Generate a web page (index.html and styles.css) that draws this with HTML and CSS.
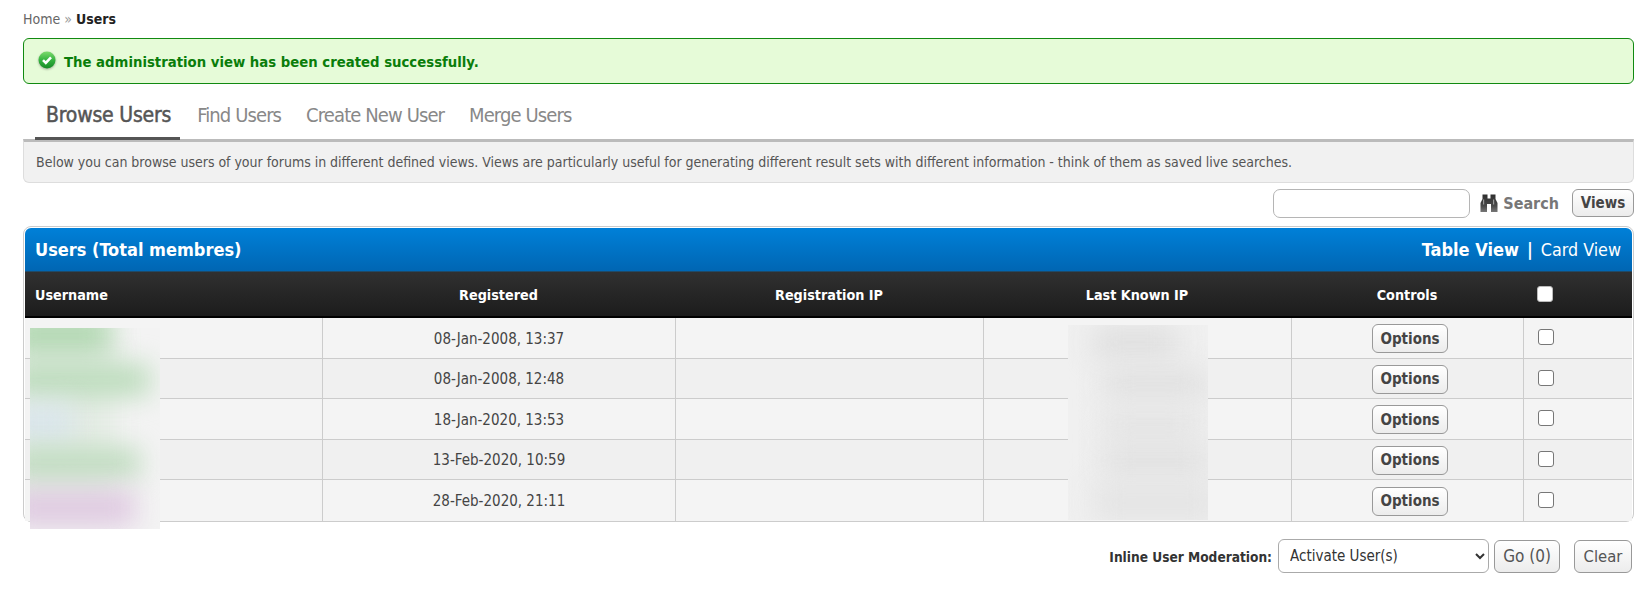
FILE: index.html
```html
<!DOCTYPE html>
<html lang="en">
<head>
<meta charset="utf-8">
<title>Users</title>
<link rel="stylesheet" href="styles.css">
</head>
<body>
<div class="breadcrumb"><a class="crumb">Home</a> <span class="sep">»</span> <strong>Users</strong></div>
<div class="success">
  <svg class="ok-icon" width="18" height="18" viewBox="0 0 18 18"><defs><linearGradient id="g" x1="0" y1="0" x2="0" y2="1"><stop offset="0" stop-color="#7edb6e"/><stop offset=".5" stop-color="#35b33f"/><stop offset="1" stop-color="#158a25"/></linearGradient></defs><circle cx="9" cy="9" r="8.500" fill="url(#g)"/><path d="M5 9.200l2.800 2.800L13 6.400" fill="none" stroke="#fff" stroke-width="2.600"/></svg>
  <span>The administration view has been created successfully.</span>
</div>
<nav class="tabs">
  <a class="tab active">Browse Users</a>
  <a class="tab">Find Users</a>
  <a class="tab">Create New User</a>
  <a class="tab">Merge Users</a>
</nav>
<div class="desc">Below you can browse users of your forums in different defined views. Views are particularly useful for generating different result sets with different information - think of them as saved live searches.</div>
<div class="searchbar">
  <input class="search-input" type="text" aria-label="Search">
  <a class="search-link">
    <svg width="18" height="20" viewBox="0 0 18 20"><defs><linearGradient id="b" x1="0" y1="0" x2="0" y2="1"><stop offset="0" stop-color="#2e2e2e"/><stop offset=".65" stop-color="#4a4a4a"/><stop offset="1" stop-color="#777"/></linearGradient></defs><path fill="url(#b)" d="M2.500 1.500h5v4h3v-4h5v4.500l2 4v9H11v-8H7v8H.5v-9l2-4z"/><path fill="#9a9a9a" d="M3 6.500h1.200v5H3zM13 6.500h1.200v5H13z"/></svg>
    <span>Search</span>
  </a>
  <button class="btn strong views">Views</button>
</div>
<section class="panel">
  <header class="panel-head">
    <h2>Users (Total membres)</h2>
    <div class="views-switch"><strong>Table View</strong><span class="pipe">|</span><span>Card View</span></div>
  </header>
  <table class="users">
    <colgroup><col class="c1"><col class="c2"><col class="c3"><col class="c4"><col class="c5"><col class="c6"></colgroup>
    <thead>
      <tr><th class="left">Username</th><th>Registered</th><th>Registration IP</th><th>Last Known IP</th><th>Controls</th><th class="left chk"><input class="box head-box" type="checkbox" aria-label="Select all"></th></tr>
    </thead>
    <tbody>
      <tr><td></td><td>08-Jan-2008, 13:37</td><td></td><td></td><td><button class="btn strong opt">Options</button></td><td class="chk"><input class="box" type="checkbox" aria-label="Select"></td></tr>
      <tr><td></td><td>08-Jan-2008, 12:48</td><td></td><td></td><td><button class="btn strong opt">Options</button></td><td class="chk"><input class="box" type="checkbox" aria-label="Select"></td></tr>
      <tr><td></td><td>18-Jan-2020, 13:53</td><td></td><td></td><td><button class="btn strong opt">Options</button></td><td class="chk"><input class="box" type="checkbox" aria-label="Select"></td></tr>
      <tr><td></td><td>13-Feb-2020, 10:59</td><td></td><td></td><td><button class="btn strong opt">Options</button></td><td class="chk"><input class="box" type="checkbox" aria-label="Select"></td></tr>
      <tr><td></td><td>28-Feb-2020, 21:11</td><td></td><td></td><td><button class="btn strong opt">Options</button></td><td class="chk"><input class="box" type="checkbox" aria-label="Select"></td></tr>
    </tbody>
  </table>
  <div class="blur blur-names">
    <i class="blob w1"></i><i class="blob b1"></i><i class="blob b2"></i><i class="blob b3"></i><i class="blob b4"></i><i class="blob b5"></i>
  </div>
  <div class="blur blur-ips">
    <i class="blob g1"></i><i class="blob g2"></i><i class="blob g3"></i><i class="blob g4"></i><i class="blob g5"></i>
  </div>
</section>
<div class="moderation">
  <label class="mod-label" for="mod">Inline User Moderation:</label>
  <select class="mod-select" id="mod"><option>Activate User(s)</option></select>
  <button class="btn go">Go (0)</button>
  <button class="btn clear">Clear</button>
</div>
</body>
</html>
```

FILE: styles.css
```css
* { box-sizing: border-box; }
html, body { margin: 0; background: #fff; }
body {
  padding: 0 10px 0 23px;
  height: 590px;
  overflow: hidden;
  font-family: "DejaVu Sans Condensed", "DejaVu Sans", sans-serif;
  font-stretch: condensed;
  font-size: 13px;
  color: #3a3a3a;
}
.breadcrumb { height: 38px; padding-top: 11px; line-height: 16px; font-size: 14px; color: #666; }
.breadcrumb strong { color: #222; }
.breadcrumb .sep { color: #999; }
.success {
  display: flex; align-items: center; gap: 8px;
  height: 46px; padding: 0 14px;
  background: #e6fbd8; border: 1px solid #118a11; border-radius: 6px;
  color: #0a7d0a; font-weight: 700; font-size: 14.75px;
}
.ok-icon { margin-bottom: 3px; filter: drop-shadow(0 1px 1px rgba(0,0,0,.3)); }
.success span { padding-top: 1px; }
.tabs { position: relative; z-index: 1; display: flex; height: 56px; padding: 12px 0 0 12px; }
.tab {
  height: 44px; line-height: 39px; padding: 0 12.5px;
  font-size: 20px; letter-spacing: -.9px; color: #888;
}
.tab.active {
  color: #555; font-size: 21px; letter-spacing: -.2px;
  padding: 0 9px 0 11px; margin-right: 4.5px;
  -webkit-text-stroke: .5px #555;
  border-bottom: 3px solid #555;
}
.desc {
  margin-top: -1px;
  height: 44px; padding: 0 12px 1px; display: flex; align-items: center;
  background: #f1f1f1; border: 1px solid #ddd; border-top: 3px solid #bbb;
  border-radius: 0 0 6px 6px; font-size: 14px; word-spacing: -.1px; color: #555;
}
.searchbar { display: flex; align-items: center; justify-content: flex-end; height: 43px; padding-bottom: 3px; }
.search-input { width: 197px; height: 29px; background: #fff; border: 1px solid #b5b5b5; border-radius: 7px; margin-right: 10px; }
.search-link { display: flex; align-items: center; gap: 5px; font-size: 16px; font-weight: 700; color: #777; margin-right: 13px; }
.btn {
  font-family: inherit; font-stretch: condensed; color: #444;
  border: 1px solid #999; border-radius: 6px;
  background: linear-gradient(#fff, #ececec);
  padding: 0;
}
.btn.strong { font-weight: 700; font-size: 15px; }
.views { width: 62px; height: 28px; }
.panel {
  position: relative; height: 296px;
  background: #fff; border: 1px solid #ccc; border-radius: 8px;
  padding: 1px 1px 0;
}
.panel-head {
  display: flex; align-items: center; justify-content: space-between;
  height: 43px; padding: 0 11px 0 10px;
  background: linear-gradient(#0080d8, #0066b3);
  border-radius: 6px 6px 0 0; color: #fff;
}
.panel-head h2 { margin: 0; font-size: 18px; font-weight: 700; }
.views-switch { display: flex; align-items: center; font-size: 17.75px; }
.views-switch strong { font-size: 18px; }
.pipe { font-weight: 700; margin: 0 8px; }
.users { width: 1607px; border-collapse: separate; border-spacing: 0; table-layout: fixed; }
.c1 { width: 297px; } .c2 { width: 353px; } .c3 { width: 308px; } .c4 { width: 308px; } .c5 { width: 232px; } .c6 { width: 109px; }
.users th {
  height: 47px; padding: 1px 0 0; text-align: center;
  background: linear-gradient(#303030, #1c1c1c);
  border-top: 1px solid #1f4a68; border-bottom: 2px solid #000;
  color: #fff; font-size: 14.25px; font-weight: 700;
}
.users th.left { text-align: left; padding-left: 10px; }
.users td {
  height: 40.5px; padding: 2px 0 0; text-align: center;
  background: #f4f4f4; border-bottom: 1px solid #ccc; border-left: 1px solid #ccc;
  font-size: 15px; color: #444;
}
.users td:first-child { border-left: 0; }
.users tbody tr:nth-child(even) td { background: #f0f0f0; }
.users tbody tr:last-child td { border-bottom: 0; }
.users td.chk, .users th.chk { text-align: left; padding: 0 0 0 14px; }
.box {
  appearance: none; display: block; margin: 0 0 1px;
  width: 16px; height: 16px; background: #fff; border: 1px solid #777; border-radius: 3px;
}
.head-box { border-color: #bbb; margin-bottom: 0; }
.opt { width: 76px; height: 29px; vertical-align: middle; margin-left: 5px; }
.blur { position: absolute; overflow: hidden; background: #f3f3f3; }
.blob { position: absolute; display: block; filter: blur(13px); }
.blur-names { left: 6px; top: 101px; width: 130px; height: 201px; }
.w1 { left: -20px; top: -10px; width: 105px; height: 195px; background: #d6e6d6; opacity: .5; }
.b1 { left: -20px; top: -14px; width: 100px; height: 40px; background: #b4d9b4; }
.b2 { left: -20px; top: 36px; width: 140px; height: 32px; background: #bcdcbc; }
.b3 { left: -20px; top: 76px; width: 62px; height: 38px; background: #dae6ec; }
.b4 { left: -20px; top: 120px; width: 130px; height: 30px; background: #c0dcc0; }
.b5 { left: -20px; top: 162px; width: 125px; height: 36px; background: #e0cae2; }
.blur-ips { left: 1044px; top: 98px; width: 140px; height: 195px; background: #f0f0f0; }
.blur-ips .blob { filter: blur(14px); }
.g1 { left: 25px; top: 2px; width: 85px; height: 30px; background: #dedede; }
.g2 { left: 35px; top: 44px; width: 105px; height: 30px; background: #e0e0e0; }
.g3 { left: 35px; top: 82px; width: 95px; height: 36px; background: #e5e5e5; }
.g4 { left: 35px; top: 118px; width: 105px; height: 36px; background: #e2e2e2; }
.g5 { left: 25px; top: 158px; width: 125px; height: 40px; background: #e4e4e4; }
.moderation { display: flex; align-items: center; justify-content: flex-end; margin-top: 17px; padding-right: 2px; height: 34px; }
.mod-label { font-size: 13.6px; font-weight: 700; color: #333; margin: 2px 6px 0 0; }
.mod-select {
  width: 211px; height: 34px; padding: 0 7px; font-family: inherit; font-stretch: condensed; font-size: 15px; color: #333;
  background: #fff; border: 1px solid #aaa; border-radius: 6px; margin-right: 5px;
}
.go, .clear { height: 33px; color: #555; }
.go { width: 66px; margin-right: 14px; font-size: 17px; }
.clear { width: 58px; font-size: 16.5px; }
```
